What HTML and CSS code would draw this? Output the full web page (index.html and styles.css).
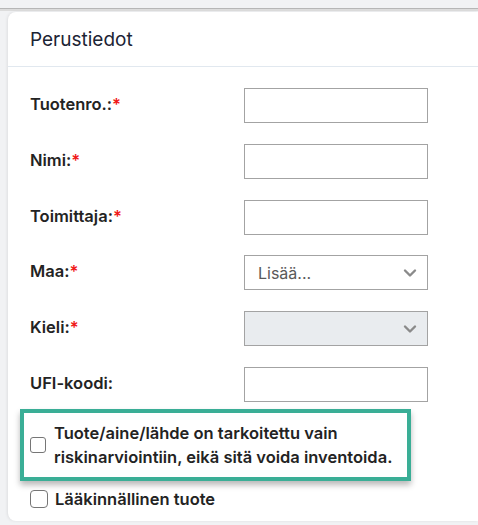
FILE: index.html
```html
<!DOCTYPE html>
<html lang="fi">
<head>
<meta charset="utf-8">
<link rel="stylesheet" href="styles.css">
</head>
<body>
<div class="topbar"></div>
<div class="card">
  <div class="card-header">Perustiedot</div>
  <div class="card-body">
    <div class="form-grid">
      <label class="lbl">Tuotenro.:<span class="req">*</span></label>
      <input class="field" type="text">
      <label class="lbl">Nimi:<span class="req">*</span></label>
      <input class="field" type="text">
      <label class="lbl">Toimittaja:<span class="req">*</span></label>
      <input class="field" type="text">
      <label class="lbl">Maa:<span class="req">*</span></label>
      <div class="field select"><span class="placeholder">Lisää...</span>
        <svg class="chev" viewBox="0 0 14 10" width="14" height="10"><path d="M2 2.5 L7 7.5 L12 2.5" fill="none" stroke="#8a8a8a" stroke-width="2.4" stroke-linecap="round" stroke-linejoin="round"/></svg>
      </div>
      <label class="lbl">Kieli:<span class="req">*</span></label>
      <div class="field select disabled">
        <svg class="chev" viewBox="0 0 14 10" width="14" height="10"><path d="M2 2.5 L7 7.5 L12 2.5" fill="none" stroke="#8a8a8a" stroke-width="2.4" stroke-linecap="round" stroke-linejoin="round"/></svg>
      </div>
      <label class="lbl">UFI-koodi:</label>
      <input class="field" type="text">
    </div>
    <div class="highlight">
      <label class="check-row">
        <input class="cb cb-small" type="checkbox">
        <span class="check-text">Tuote/aine/lähde on tarkoitettu vain riskinarviointiin, eikä sitä voida inventoida.</span>
      </label>
    </div>
    <label class="check-row single">
      <input class="cb" type="checkbox">
      <span class="check-text">Lääkinnällinen tuote</span>
    </label>
  </div>
</div>
</body>
</html>
```
FILE: styles.css
```css
html, body {
  margin: 0;
  padding: 0;
}
body {
  background: #f1f2f4;
  font-family: Inter, "Noto Sans", sans-serif;
  width: 478px;
  height: 525px;
  overflow: hidden;
}
.topbar {
  height: 8px;
  border-bottom: 1px solid #b6b6b6;
  box-shadow: 0 2px 0 #dcdcdc;
}
.card {
  margin: 3px 0 0 8px;
  background: #fff;
  border-radius: 8px 0 0 8px;
  box-shadow: -1px 0 3px rgba(0,0,0,0.08);
  height: 509px;
  overflow: hidden;
}
.card-header {
  height: 54px;
  border-bottom: 1px solid #e1e8ef;
  padding-left: 22px;
  display: flex;
  align-items: center;
  font-size: 19px;
  color: #1c2434;
}
.card-body {
  padding: 21px 0 0 12px;
}
.form-grid {
  display: grid;
  grid-template-columns: 214px 184px;
  row-gap: 20.8px;
  align-items: center;
  padding-left: 10px;
}
.lbl {
  font-size: 16.5px;
  font-weight: 600;
  color: #232323;
  margin-top: -3px;
}
.req {
  color: #f01818;
}
.field {
  box-sizing: border-box;
  width: 184px;
  height: 35px;
  border: 1px solid #a3a3a3;
  border-radius: 0;
  background: #fff;
  margin: 0;
  font-family: inherit;
  font-size: 16px;
}
.select {
  display: flex;
  align-items: center;
  justify-content: space-between;
  padding: 0 10px 0 13px;
}
.select.disabled {
  background: #e9ecef;
  justify-content: flex-end;
}
.placeholder {
  color: #595959;
  font-size: 16px;
}
.chev {
  display: block;
}
.highlight {
  margin-top: 7px;
  width: 391px;
  box-sizing: border-box;
  border: 4px solid #3aae96;
  box-shadow: 0 4px 6px rgba(0,0,0,0.28);
  padding: 8px 0 8px 6px;
}
.check-row {
  display: flex;
  align-items: center;
  gap: 8px;
  font-size: 16.5px;
  font-weight: 600;
  color: #232323;
  line-height: 24px;
}
.check-row.single {
  margin-top: 6px;
  padding-left: 10px;
  gap: 7px;
}
.cb {
  -webkit-appearance: none;
  appearance: none;
  margin: 0;
  width: 18px;
  height: 18px;
  border: 1.5px solid #767676;
  border-radius: 4px;
  background: #fff;
  flex: none;
  box-sizing: border-box;
}
.cb-small {
  width: 16px;
  height: 16px;
  border-radius: 3px;
}
```
